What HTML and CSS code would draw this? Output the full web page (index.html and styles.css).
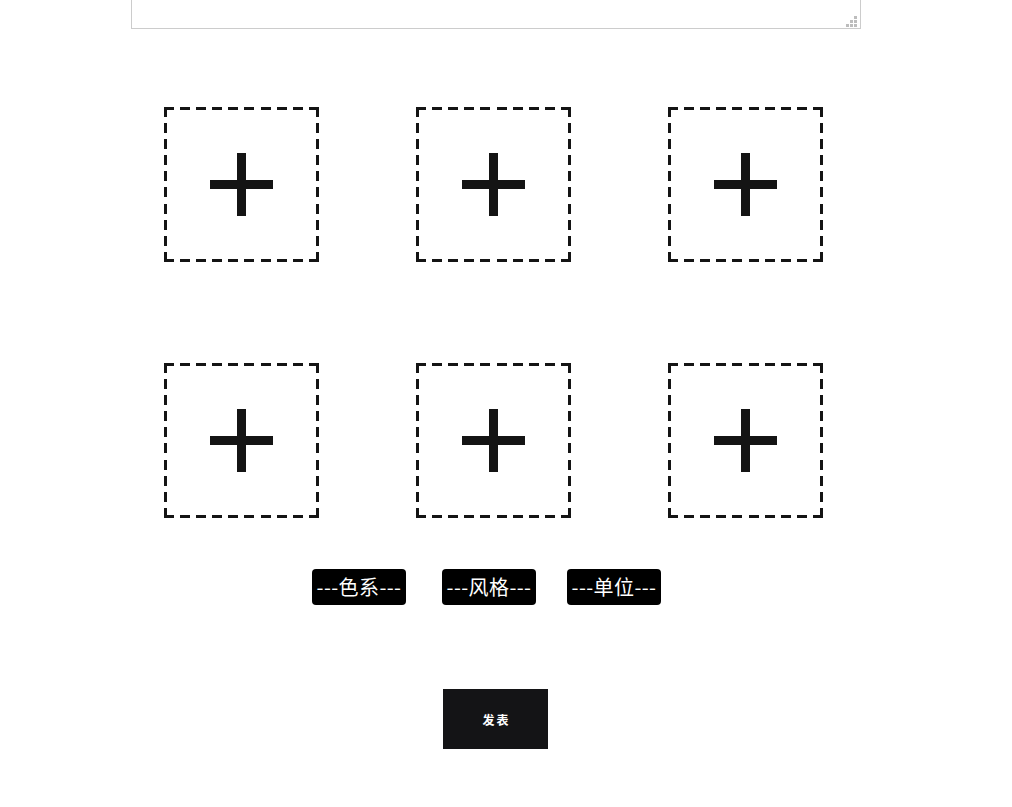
FILE: index.html
```html
<!DOCTYPE html>
<html lang="zh">
<head>
<meta charset="utf-8">
<title>发表</title>
<link rel="stylesheet" href="styles.css">
</head>
<body>
<div class="editor">
  <textarea class="content"></textarea>
  <svg class="grip" width="11" height="11" viewBox="0 0 11 11">
    <rect x="8" y="0" width="3" height="3" fill="#bdbdbd"/>
    <rect x="4" y="4" width="3" height="3" fill="#bdbdbd"/>
    <rect x="8" y="4" width="3" height="3" fill="#bdbdbd"/>
    <rect x="0" y="8" width="3" height="3" fill="#bdbdbd"/>
    <rect x="4" y="8" width="3" height="3" fill="#bdbdbd"/>
    <rect x="8" y="8" width="3" height="3" fill="#bdbdbd"/>
  </svg>
</div>
<div class="uploads">
  <div class="upload"><svg width="63" height="63" viewBox="0 0 63 63"><rect x="0" y="27" width="63" height="9" fill="#141414"/><rect x="27" y="0" width="9" height="63" fill="#141414"/></svg></div>
  <div class="upload"><svg width="63" height="63" viewBox="0 0 63 63"><rect x="0" y="27" width="63" height="9" fill="#141414"/><rect x="27" y="0" width="9" height="63" fill="#141414"/></svg></div>
  <div class="upload"><svg width="63" height="63" viewBox="0 0 63 63"><rect x="0" y="27" width="63" height="9" fill="#141414"/><rect x="27" y="0" width="9" height="63" fill="#141414"/></svg></div>
  <div class="upload"><svg width="63" height="63" viewBox="0 0 63 63"><rect x="0" y="27" width="63" height="9" fill="#141414"/><rect x="27" y="0" width="9" height="63" fill="#141414"/></svg></div>
  <div class="upload"><svg width="63" height="63" viewBox="0 0 63 63"><rect x="0" y="27" width="63" height="9" fill="#141414"/><rect x="27" y="0" width="9" height="63" fill="#141414"/></svg></div>
  <div class="upload"><svg width="63" height="63" viewBox="0 0 63 63"><rect x="0" y="27" width="63" height="9" fill="#141414"/><rect x="27" y="0" width="9" height="63" fill="#141414"/></svg></div>
</div>
<div class="selects">
  <div class="select">---色系---</div>
  <div class="select s2">---风格---</div>
  <div class="select s3">---单位---</div>
</div>
<div class="actions">
  <button class="publish">发表</button>
</div>
</body>
</html>
```
FILE: styles.css
```css
html, body {
  margin: 0;
  padding: 0;
  background: #fff;
  font-family: "Noto Sans CJK SC", "Noto Sans", sans-serif;
  overflow: hidden;
}
.editor {
  position: relative;
  width: 730px;
  margin: -100px 0 0 131px;
}
.content {
  display: block;
  box-sizing: border-box;
  width: 730px;
  height: 129px;
  border: 1px solid #cccccc;
  padding: 4px;
  background: #fff;
  outline: none;
  resize: none;
}
.grip {
  position: absolute;
  right: 4px;
  bottom: 2px;
  display: block;
}
.uploads {
  display: grid;
  grid-template-columns: repeat(3, 155px);
  column-gap: 97px;
  row-gap: 101px;
  margin: 78px 0 0 164px;
}
.upload {
  box-sizing: border-box;
  width: 155px;
  height: 155px;
  display: flex;
  align-items: center;
  justify-content: center;
  background:
    repeating-linear-gradient(90deg, #141414 0 10px, transparent 10px 16.1px) left top / 100% 3px no-repeat,
    repeating-linear-gradient(90deg, #141414 0 10px, transparent 10px 16.1px) left bottom / 100% 3px no-repeat,
    repeating-linear-gradient(180deg, #141414 0 10px, transparent 10px 16.1px) left top / 3px 100% no-repeat,
    repeating-linear-gradient(180deg, #141414 0 10px, transparent 10px 16.1px) right top / 3px 100% no-repeat;
}
.upload svg {
  display: block;
}
.selects {
  display: flex;
  margin: 51px 0 0 312px;
}
.select {
  box-sizing: border-box;
  width: 94px;
  height: 36px;
  background: #000;
  color: #fff;
  border-radius: 4px;
  font-size: 20px;
  line-height: 36px;
  text-align: center;
  white-space: nowrap;
  letter-spacing: 0.4px;
}
.s2 {
  margin-left: 36px;
}
.s3 {
  margin-left: 31px;
}
.actions {
  display: flex;
  margin: 84px 0 0 443px;
}
.publish {
  width: 105px;
  height: 60px;
  border: none;
  background: #141416;
  color: #fff;
  font-family: "Noto Sans CJK SC", sans-serif;
  font-size: 12px;
  font-weight: 700;
  letter-spacing: 2px;
  padding: 0 0 0 2px;
}
```
